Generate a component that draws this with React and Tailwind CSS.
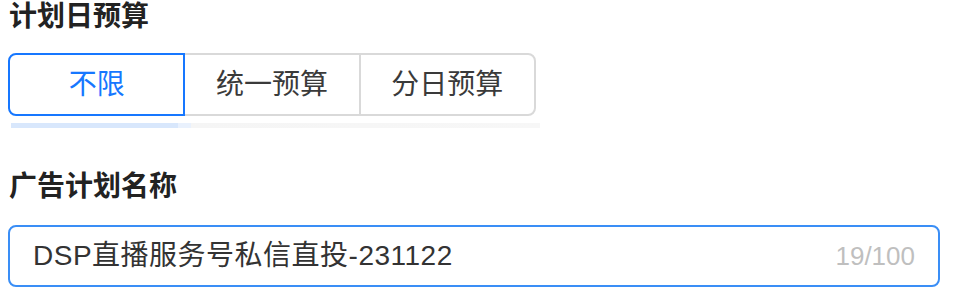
import React, { useState } from "react";

const FONT = "font-['Liberation_Sans','Noto_Sans_CJK_SC',sans-serif]";

const OPTIONS = ["不限", "统一预算", "分日预算"];

const BudgetSwitch = ({ value, onChange }) => (
  <div className="flex h-[63px] w-[528px]">
    {OPTIONS.map((opt, i) => {
      const active = value === opt;
      const edge =
        i === 0
          ? "rounded-l-[8px] border-l-2"
          : i === OPTIONS.length - 1
          ? "rounded-r-[8px] border-r-2"
          : "";
      return (
        <button
          key={opt}
          type="button"
          onClick={() => onChange(opt)}
          className={`flex-1 flex items-center justify-center border-y-2 text-[28px] ${edge} ${
            i > 0 ? "border-l-2" : ""
          } ${
            active
              ? "border-[#1677ff] text-[#1677ff] border-r-2 -mr-[2px] relative z-10"
              : "border-[#d9d9d9] text-[#3a3a3a] bg-white"
          }`}
        >
          {opt}
        </button>
      );
    })}
  </div>
);

export default function App() {
  const [budget, setBudget] = useState("不限");
  const [name, setName] = useState("DSP直播服务号私信直投-231122");

  return (
    <div className={`min-h-[299px] bg-white pl-[8px] ${FONT}`}>
      <h3 className="pl-[1px] text-[28px] leading-[34px] font-bold text-[#222]">计划日预算</h3>

      <div className="mt-[19px]">
        <BudgetSwitch value={budget} onChange={setBudget} />
      </div>
      <div className="mt-[7px] ml-[3px] h-[5px] w-[529px] bg-[linear-gradient(to_right,#d8e7fc_0,#d8e7fc_167px,#e9f1fd_167px,#e9f1fd_180px,#f5f5f5_180px,#f7f7f7_100%)]"></div>

      <h3 className="mt-[42px] pl-[1px] text-[28px] leading-[34px] font-bold text-[#222]">广告计划名称</h3>

      <div className="mt-[21px] flex items-center h-[62px] w-[932px] rounded-[8px] border-2 border-[#3a8ef6] pl-[23px] pr-[23px]">
        <input
          value={name}
          maxLength={100}
          onChange={(e) => setName(e.target.value)}
          className="flex-1 min-w-0 bg-transparent outline-none text-[28px] tracking-[0.5px] text-[#333]"
        />
        <span className="text-[26px] text-[#bfbfbf]">{name.length}/100</span>
      </div>
    </div>
  );
}
